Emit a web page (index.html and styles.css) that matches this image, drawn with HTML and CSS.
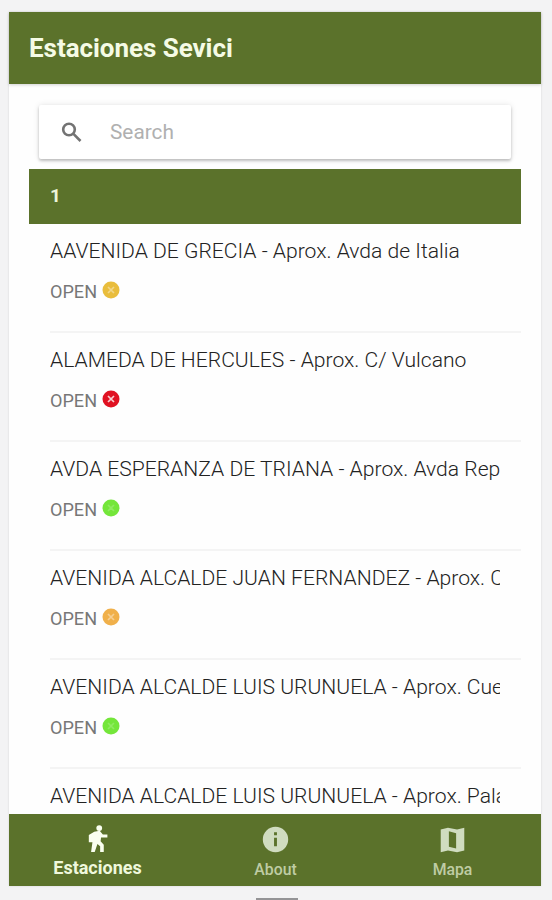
FILE: index.html
```html
<!DOCTYPE html>
<html lang="es">
<head>
    <meta charset="UTF-8">
    <meta name="viewport" content="width=device-width, initial-scale=1.0">
    <title>Estaciones Sevici</title>
    <link rel="stylesheet" href="styles.css">
</head>
<body>
    <svg class="symbols">
        <symbol id="close-circle" viewBox="0 0 18 18">
            <circle cx="9" cy="9" r="8.5" fill="currentColor"/>
            <path d="M6 6l6 6M12 6l-6 6" fill="none" stroke="#fff" stroke-opacity="var(--cross)" stroke-width="1.7"/>
        </symbol>
    </svg>

    <div class="app">
        <header class="toolbar">
            <h1>Estaciones Sevici</h1>
        </header>

        <main class="content">
            <!-- Buscador -->
            <label class="searchbar">
                <svg class="search-icon" viewBox="0 0 21 21"><circle cx="8" cy="7.500" r="5.800"/><path d="M12.200 11.700L19.500 19"/></svg>
                <input type="text" placeholder="Search">
            </label>

            <div class="divider">1</div>

            <!-- Lista de estaciones -->
            <ul class="stations">
                <li class="station">
                    <h2>AAVENIDA DE GRECIA - Aprox. Avda de Italia</h2>
                    <p>OPEN <svg class="status few"><use href="#close-circle"/></svg></p>
                </li>
                <li class="station">
                    <h2>ALAMEDA DE HERCULES - Aprox. C/ Vulcano</h2>
                    <p>OPEN <svg class="status empty"><use href="#close-circle"/></svg></p>
                </li>
                <li class="station">
                    <h2>AVDA ESPERANZA DE TRIANA - Aprox. Avda Rep</h2>
                    <p>OPEN <svg class="status free"><use href="#close-circle"/></svg></p>
                </li>
                <li class="station">
                    <h2>AVENIDA ALCALDE JUAN FERNANDEZ - Aprox. C</h2>
                    <p>OPEN <svg class="status low"><use href="#close-circle"/></svg></p>
                </li>
                <li class="station">
                    <h2>AVENIDA ALCALDE LUIS URUNUELA - Aprox. Cue</h2>
                    <p>OPEN <svg class="status free"><use href="#close-circle"/></svg></p>
                </li>
                <li class="station">
                    <h2>AVENIDA ALCALDE LUIS URUNUELA - Aprox. Pala</h2>
                    <p>OPEN <svg class="status free"><use href="#close-circle"/></svg></p>
                </li>
            </ul>
        </main>

        <nav class="tabs">
            <a class="tab active">
                <svg viewBox="0 0 24 32"><circle cx="13.500" cy="4.500" r="3.200"/><path d="M8 8.500l6-1 3.500 4h5v3.500h-7l-.5 4 3.500 4V31h-4v-6.500l-3-2.500L8.500 31h-4l1.500-11H2v-8z"/></svg>
                <span>Estaciones</span>
            </a>
            <a class="tab">
                <svg viewBox="0 0 32 32"><path fill-rule="evenodd" d="M16 2a14 14 0 1 0 0 28 14 14 0 0 0 0-28zm-1.600 6h3.200v3.200h-3.200zM14.400 14h3.200v9.500h-3.200z"/></svg>
                <span>About</span>
            </a>
            <a class="tab">
                <svg viewBox="0 0 32 32"><path fill-rule="evenodd" d="M3 5l8-2 10 2 8-2v25l-8 2-10-2-8 2zM12 7v17l8 2V9z"/></svg>
                <span>Mapa</span>
            </a>
        </nav>
    </div>
    <div class="handle"></div>
</body>
</html>
```

FILE: styles.css
```css
* {
    box-sizing: border-box;
}
body {
    margin: 0;
    height: 900px;
    padding: 12px 11px 0 9px;
    overflow: hidden;
    background-color: #f3f3f4;
    font-family: Roboto, sans-serif;
}
.symbols {
    display: none;
}
.app {
    display: flex;
    flex-direction: column;
    height: 874px;
    background-color: #fefefe;
    box-shadow: 0 0 2px rgba(0, 0, 0, 0.12);
}
.toolbar {
    display: flex;
    align-items: center;
    flex: 0 0 72px;
    padding-left: 20px;
    background-color: #5b722b;
    box-shadow: 0 1px 3px rgba(0, 0, 0, 0.18);
}
.toolbar h1 {
    margin: 0;
    color: #f5fbe5;
    font-size: 26px;
    font-weight: 700;
    letter-spacing: -0.05px;
}
.content {
    flex: 1;
    min-height: 0;
    overflow: hidden;
    padding: 21px 20px 0;
}
.searchbar {
    display: flex;
    align-items: center;
    height: 54px;
    margin: 0 10px 10px;
    padding-left: 22px;
    background-color: #fff;
    border-radius: 2px;
    box-shadow: 0 2px 3px rgba(0, 0, 0, 0.22), 0 0 6px rgba(0, 0, 0, 0.1);
}
.search-icon {
    width: 21px;
    height: 21px;
    fill: none;
    stroke: #737373;
    stroke-width: 2.6;
}
.searchbar input {
    flex: 1;
    margin-left: 28px;
    padding: 0;
    border: none;
    outline: none;
    background: none;
    font: 20.800px Roboto, sans-serif;
}
.searchbar input::placeholder {
    color: #b0b0b0;
}
.divider {
    height: 55px;
    padding-left: 21px;
    line-height: 54px;
    background-color: #5b722b;
    color: #edf5d8;
    font-size: 19px;
    font-weight: 700;
}
.stations {
    margin: 0;
    padding: 0 0 0 21px;
    list-style: none;
}
.station {
    height: 109.100px;
    padding: 13px 21px 0 0;
    border-bottom: 2px solid #f4f4f4;
}
.station h2 {
    margin: 0;
    overflow: hidden;
    white-space: nowrap;
    color: #222;
    font-size: 21.100px;
    font-weight: 300;
    line-height: 28px;
}
.station p {
    display: flex;
    align-items: center;
    gap: 5px;
    margin: 14px 0 0;
    color: #777;
    font-size: 18.100px;
    line-height: 26px;
}
.status {
    width: 18px;
    height: 18px;
    margin-top: -4px;
    --cross: 0.4;
}
.few {
    color: #e9bd3c;
}
.empty {
    color: #e01222;
    --cross: 0.8;
}
.free {
    color: #74e63a;
    --cross: 0.2;
}
.low {
    color: #f0b04a;
}
.tabs {
    display: flex;
    flex: 0 0 72px;
    background-color: #5b722b;
}
.tab {
    display: flex;
    flex: 1;
    flex-direction: column;
    align-items: center;
    padding-top: 11px;
    color: #bfcca4;
    font-size: 15.800px;
    font-weight: 500;
}
.tab svg {
    height: 29px;
    fill: #d0dcc0;
}
.tab span {
    margin-top: 5px;
    line-height: 22px;
}
.tab.active {
    padding-top: 10px;
    padding-right: 1px;
    color: #eff8dc;
    font-size: 18px;
    font-weight: 700;
}
.tab.active svg {
    fill: #fafff0;
}
.tab.active span {
    margin-top: 4px;
}
.handle {
    width: 42px;
    height: 2px;
    margin: 12px 0 0 247px;
    background-color: #949496;
}
```
